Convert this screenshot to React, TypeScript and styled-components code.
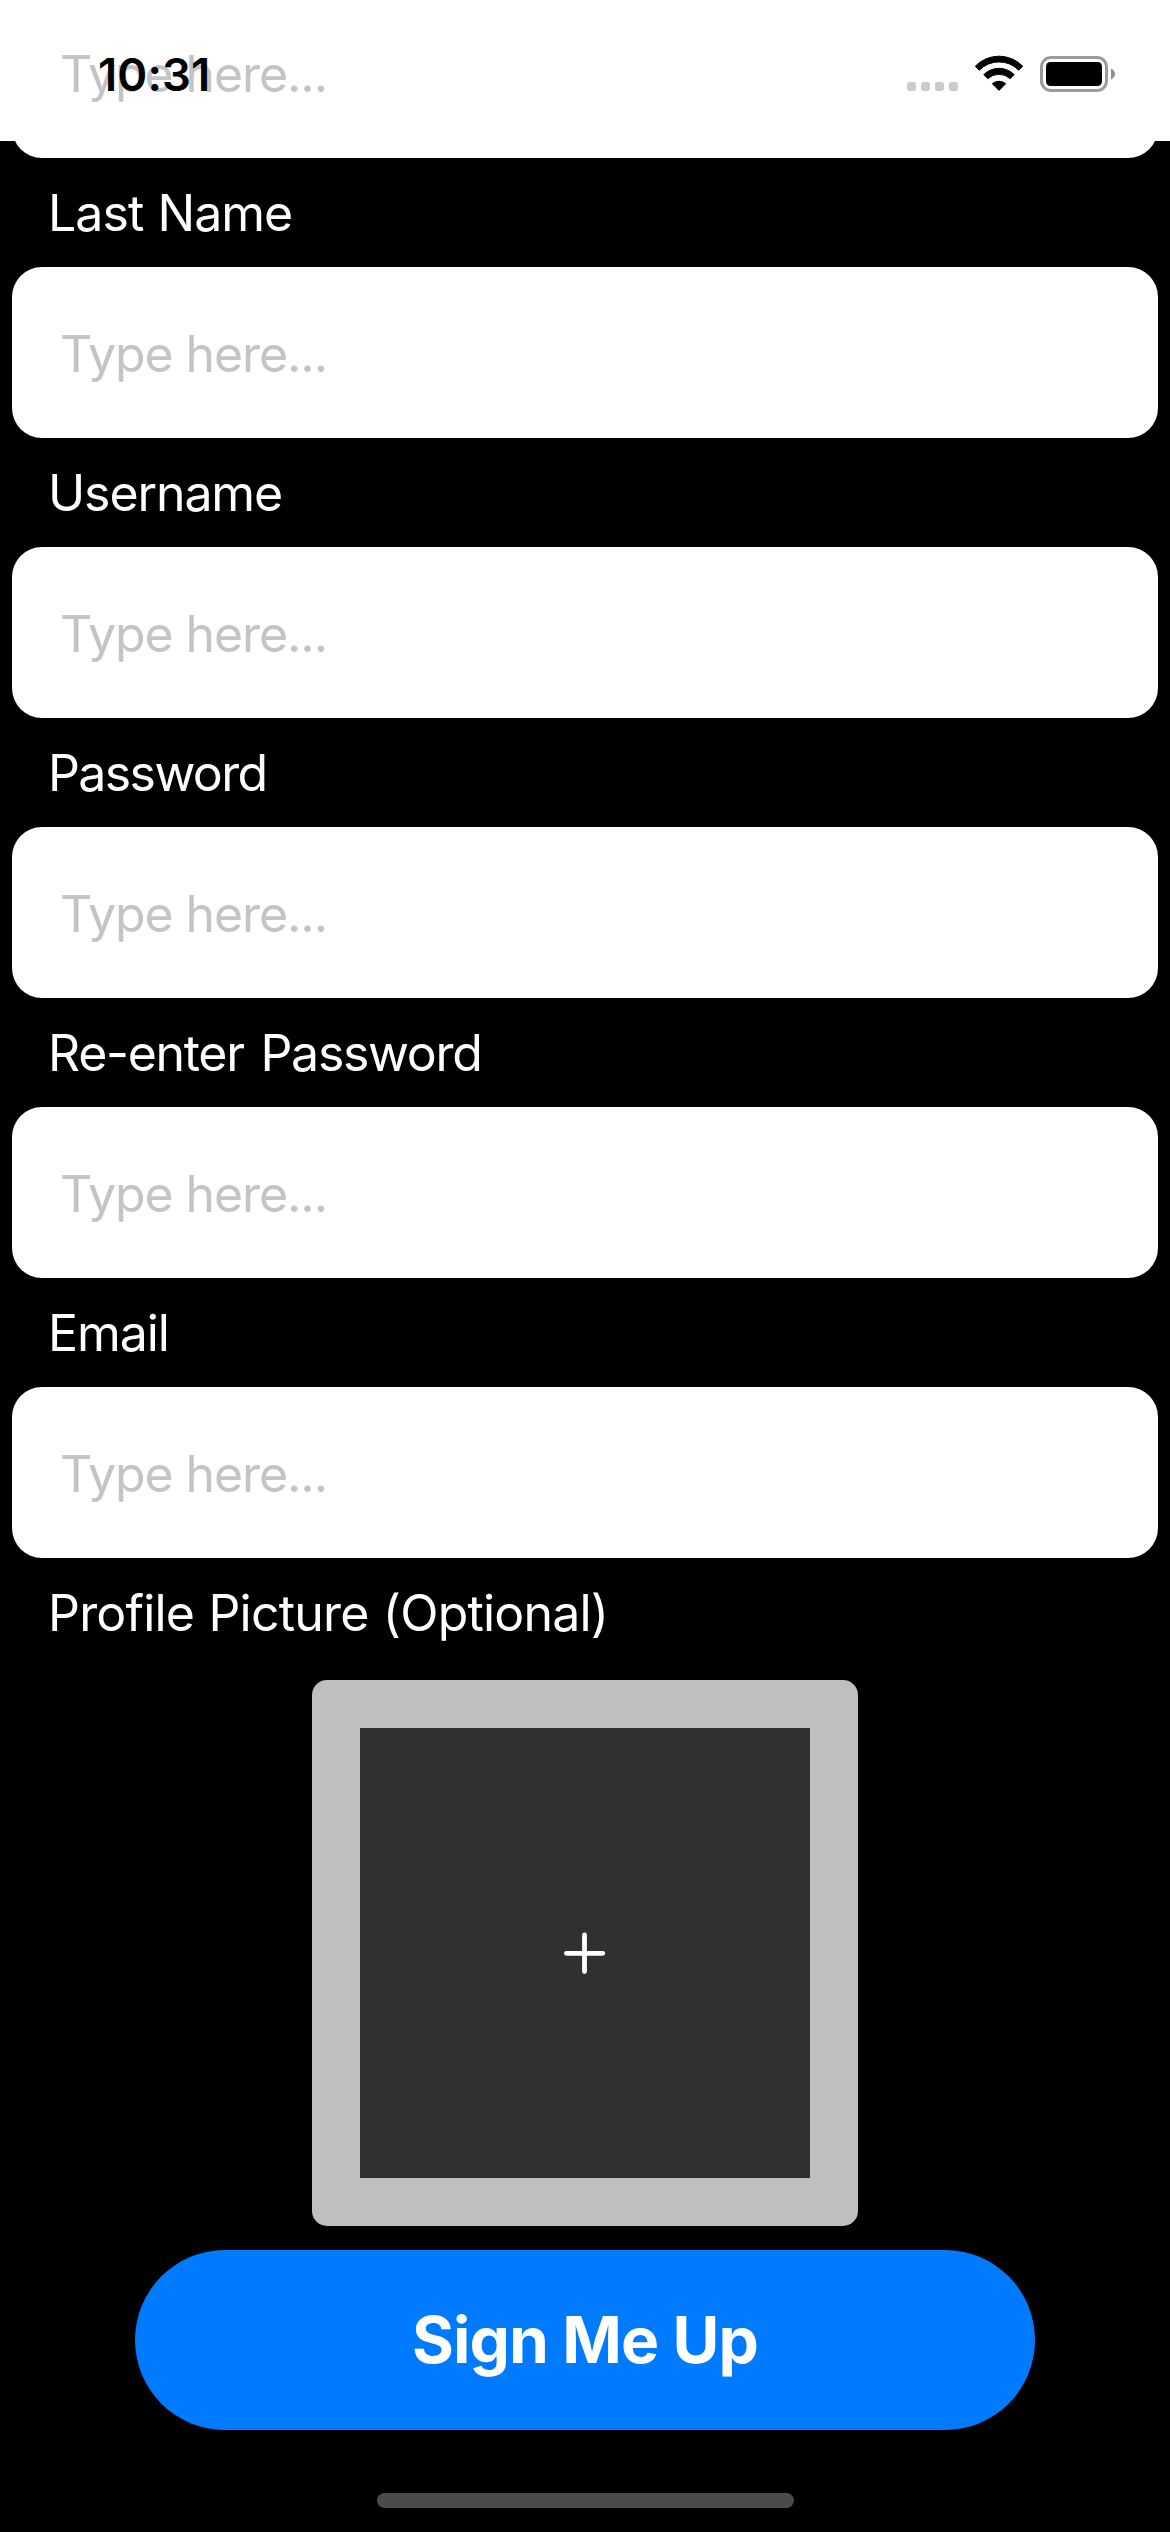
import React from "react";
import styled, { createGlobalStyle } from "styled-components";

const GlobalStyle = createGlobalStyle`
  * { box-sizing: border-box; }
  body { margin: 0; background: #000; }
`;

const Screen = styled.main`
  position: relative;
  width: 1170px;
  height: 2532px;
  overflow: hidden;
  display: flex;
  flex-direction: column;
  background: linear-gradient(#fff 141px, #000 141px);
  font-family: Inter, "Liberation Sans", sans-serif;
`;

const StatusBar = styled.header`
  position: absolute;
  inset: 0 0 auto 0;
  height: 141px;
  padding: 0 54px 0 98px;
  display: flex;
  justify-content: space-between;
`;

const Clock = styled.time`
  margin-top: 47px;
  font-size: 45.5px;
  line-height: 55px;
  font-weight: 600;
  letter-spacing: 0.1px;
  color: #000;
`;

const StatusIcons = styled.svg`
  width: 210px;
  height: 38px;
  margin-top: 54px;
`;

const Form = styled.form`
  display: flex;
  flex-direction: column;
  margin-top: -13px;
`;

const Label = styled.label<{ $tracking: number; $wordGap?: number }>`
  height: 109px;
  padding: 24px 48px 0;
  font-size: 50px;
  line-height: 62px;
  letter-spacing: ${(p) => p.$tracking}px;
  word-spacing: ${(p) => p.$wordGap ?? 0}px;
  white-space: nowrap;
  color: #fff;
`;

const Field = styled.div`
  height: 171px;
  margin: 0 12px;
  padding: 56px 48px 0;
  border-radius: 30px;
  background: #fff;
`;

const Placeholder = styled.span`
  display: block;
  font-size: 50px;
  line-height: 62px;
  letter-spacing: -1.1px;
  color: #c4c4c6;
`;

const PictureFrame = styled.div`
  align-self: center;
  width: 546px;
  height: 546px;
  margin-top: 13px;
  padding: 48px;
  border-radius: 15px;
  background: #bfbfbf;
`;

const PictureButton = styled.button.attrs({ type: "button" })`
  display: grid;
  place-items: center;
  width: 100%;
  height: 100%;
  padding: 0;
  border: 0;
  background: #303030;
`;

const SubmitButton = styled.button.attrs({ type: "button" })`
  align-self: center;
  width: 900px;
  height: 180px;
  margin-top: 24px;
  padding: 0;
  border: 0;
  border-radius: 90px;
  background: #007aff;
  color: #fff;
  font: 700 64px/78px Inter, "Liberation Sans", sans-serif;
  letter-spacing: -0.9px;
`;

const HomeIndicator = styled.div`
  align-self: center;
  width: 417px;
  height: 15px;
  margin-top: 63px;
  border-radius: 8px;
  background: #4b4b4b;
`;

const fields = [
  { label: "Last Name", tracking: -0.95, wordGap: 1 },
  { label: "Username", tracking: -1.1 },
  { label: "Password", tracking: -1.6 },
  { label: "Re-enter Password", tracking: -1.3, wordGap: 4 },
  { label: "Email", tracking: -1.05 },
];

const Entry = () => (
  <Field>
    <Placeholder>Type here...</Placeholder>
  </Field>
);

export default function App() {
  return (
    <>
      <GlobalStyle />
      <Screen>
        <Form>
          <Entry />
          {fields.map((f) => (
            <React.Fragment key={f.label}>
              <Label $tracking={f.tracking} $wordGap={f.wordGap}>
                {f.label}
              </Label>
              <Entry />
            </React.Fragment>
          ))}
          <Label $tracking={-0.8} $wordGap={1}>Profile Picture (Optional)</Label>
          <PictureFrame>
            <PictureButton aria-label="Add picture">
              <svg width="42" height="42" viewBox="0 0 42 42" fill="none" stroke="#fff" strokeWidth="4.8" strokeLinecap="round">
                <path d="M20.5 3v36.6M2.4 21.3h36.4" />
              </svg>
            </PictureButton>
          </PictureFrame>
          <SubmitButton>Sign Me Up</SubmitButton>
        </Form>
        <HomeIndicator />
        <StatusBar>
          <Clock>10:31</Clock>
          <StatusIcons viewBox="906 54 210 38">
            <g fill="#cbcbcb">
              <rect x="907" y="82" width="9" height="9" rx="2.8" />
              <rect x="921" y="82" width="9" height="9" rx="2.8" />
              <rect x="935" y="82" width="9" height="9" rx="2.8" />
              <rect x="949" y="82" width="9" height="9" rx="2.8" />
            </g>
            <g fill="#000" stroke="#000" strokeWidth="1" strokeLinejoin="round">
              <path d="M975.3 66.2A33 33 0 0 1 1022.7 66.2L1018.7 70.2A27.5 27.5 0 0 0 979.3 70.2Z" />
              <path d="M983.8 74.6A21.5 21.5 0 0 1 1014.2 74.6L1010.2 78.7A16.5 16.5 0 0 0 987.8 78.7Z" />
              <path d="M992.3 83.7A10.5 10.5 0 0 1 1005.7 83.7L999 90.4Z" />
            </g>
            <rect x="1041.5" y="57.5" width="65" height="33" rx="9.5" fill="none" stroke="#9b9b9b" strokeWidth="3" />
            <rect x="1046" y="62" width="56" height="24" rx="4.5" fill="#000" />
            <path d="M1111 68.5c2.4.9 4 3 4 5.5s-1.6 4.600-4 5.500z" fill="#8f8f8f" />
          </StatusIcons>
        </StatusBar>
      </Screen>
    </>
  );
}
